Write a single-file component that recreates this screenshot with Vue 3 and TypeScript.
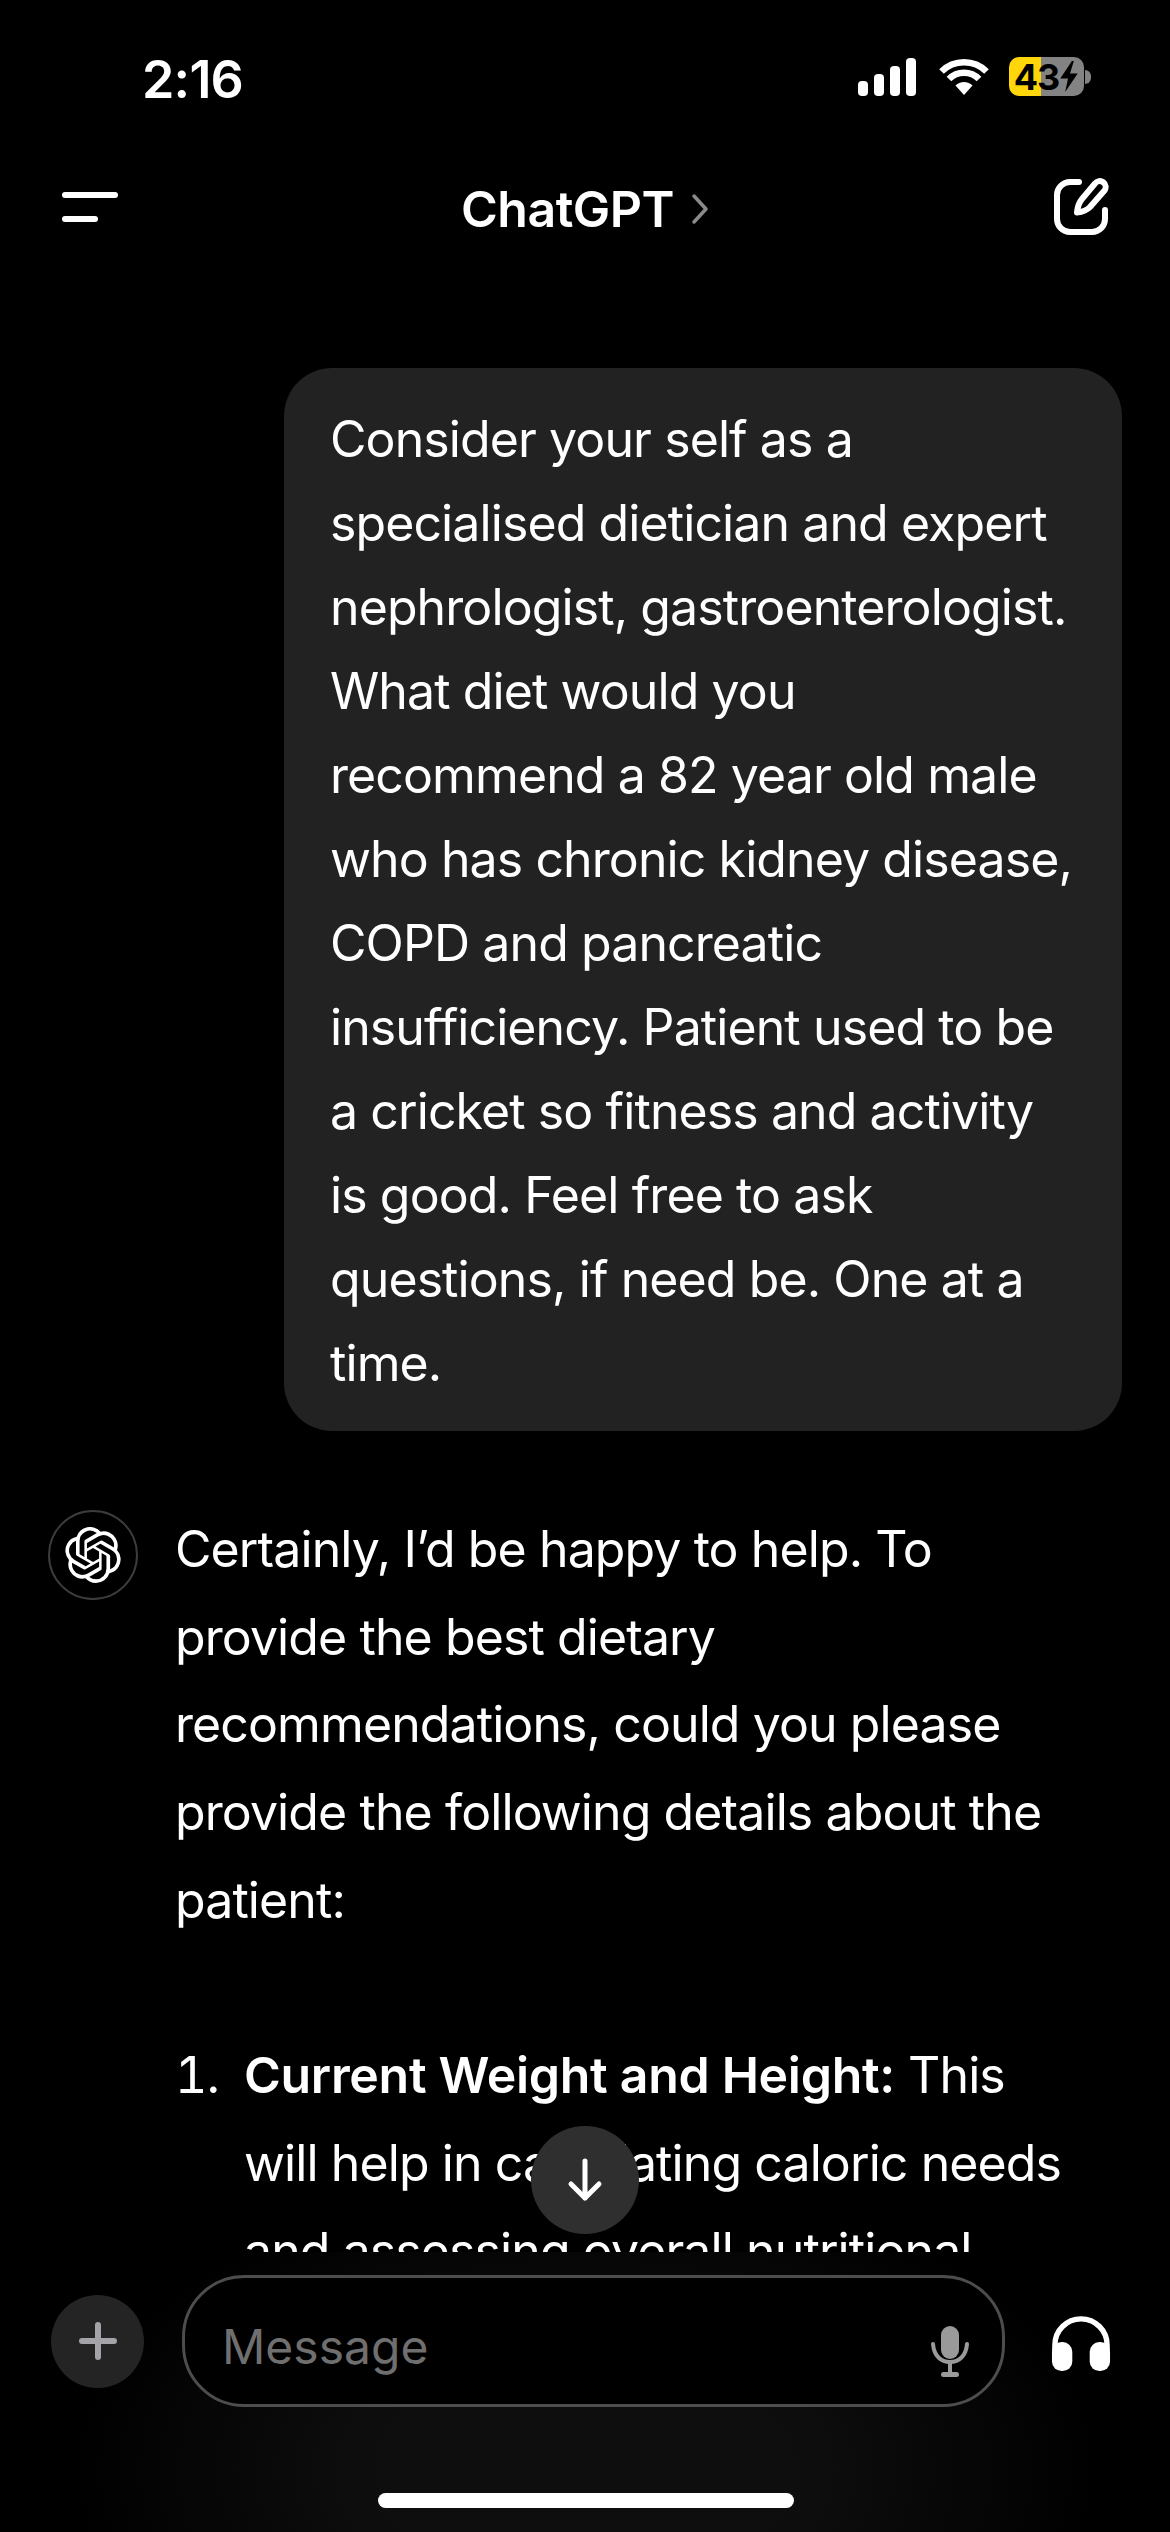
<script setup lang="ts">
const promptText =
  'Consider your self as a specialised dietician and expert nephrologist, gastroenterologist. What diet would you recommend a 82 year old male who has chronic kidney disease, COPD and pancreatic insufficiency. Patient used to be a cricket so fitness and activity is good. Feel free to ask questions, if need be. One at a time.'

const introText =
  'Certainly, I’d be happy to help. To provide the best dietary recommendations, could you please provide the following details about the patient:'

const signalBars = [20, 30, 40, 52]
</script>

<template>
  <div class="phone">
    <header class="status-bar">
      <span class="time">2:16</span>
      <div class="status-icons">
        <div class="signal">
          <span v-for="h in signalBars" :key="h" class="bar" :style="{ height: h / 1.37 + 'px' }"></span>
        </div>
        <svg class="wifi" viewBox="0 0 50 36" width="50" height="36">
          <path d="M25 36 16.5 26.5a12 12 0 0 1 17 0Z" fill="#fff" />
          <path d="M10 20a21 21 0 0 1 30 0" fill="none" stroke="#fff" stroke-width="6.5" />
          <path d="M2.5 12.500a32 32 0 0 1 45 0" fill="none" stroke="#fff" stroke-width="6.5" />
        </svg>
        <div class="battery">
          <div class="battery-body">
            <span>43</span>
            <svg viewBox="0 0 20 32" width="20" height="31">
              <path d="M13 0 1 18h8l-3 14 13-19h-8l4-13Z" fill="#000" />
            </svg>
          </div>
          <span class="battery-nub"></span>
        </div>
      </div>
    </header>

    <nav class="nav-bar">
      <div class="menu-icon">
        <span class="line-long"></span>
        <span class="line-short"></span>
      </div>
      <div class="nav-title">
        <span>ChatGPT</span>
        <svg viewBox="0 0 20 32" width="20" height="32">
          <path d="M4 3 16 16 4 29" fill="none" stroke="#8a8a8e" stroke-width="3.500" stroke-linecap="round" stroke-linejoin="round" />
        </svg>
      </div>
      <svg class="compose-icon" viewBox="0 0 56 58" width="56" height="58">
        <path d="M26 4H17A13 13 0 0 0 4 17V41A13 13 0 0 0 17 54H39A13 13 0 0 0 52 41V32" fill="none" stroke="#fff" stroke-width="6" stroke-linecap="round" />
        <path d="M42 5.500a5.500 5.500 0 0 1 9.500 7L37 29c-3 3.200-8 5-13 5.500 .5-5 2-10 5-13.500Z" fill="none" stroke="#fff" stroke-width="6" stroke-linejoin="round" />
      </svg>
    </nav>

    <main class="chat">
      <div class="user-bubble">{{ promptText }}</div>

      <section class="assistant">
        <div class="avatar">
          <svg viewBox="0 0 24 24" width="56" height="56">
            <path fill="#fff" d="M22.2819 9.8211a5.9847 5.9847 0 0 0-.5157-4.9108 6.0462 6.0462 0 0 0-6.5098-2.9A6.0651 6.0651 0 0 0 4.9807 4.1818a5.9847 5.9847 0 0 0-3.9977 2.9 6.0462 6.0462 0 0 0 .7427 7.0966 5.98 5.98 0 0 0 .511 4.9107 6.051 6.051 0 0 0 6.5146 2.9001A5.9847 5.9847 0 0 0 13.2599 24a6.0557 6.0557 0 0 0 5.7718-4.2058 5.9894 5.9894 0 0 0 3.9977-2.9001 6.0557 6.0557 0 0 0-.7475-7.0729zm-9.022 12.6081a4.4755 4.4755 0 0 1-2.8764-1.0408l.1419-.0804 4.7783-2.7582a.7948.7948 0 0 0 .3927-.6813v-6.7369l2.02 1.1686a.071.071 0 0 1 .038.052v5.5826a4.504 4.504 0 0 1-4.4945 4.4944zm-9.6607-4.1254a4.4708 4.4708 0 0 1-.5346-3.0137l.142.0852 4.783 2.7582a.7712.7712 0 0 0 .7806 0l5.8428-3.3685v2.3324a.0804.0804 0 0 1-.0332.0615L9.74 19.9502a4.4992 4.4992 0 0 1-6.1408-1.6464zM2.3408 7.8956a4.485 4.485 0 0 1 2.3655-1.9728V11.6a.7664.7664 0 0 0 .3879.6765l5.8144 3.3543-2.0201 1.1685a.0757.0757 0 0 1-.071 0l-4.8303-2.7865A4.504 4.504 0 0 1 2.3408 7.872zm16.5963 3.8558L13.1038 8.364 15.1192 7.2a.0757.0757 0 0 1 .071 0l4.8303 2.7913a4.4944 4.4944 0 0 1-.6765 8.1042v-5.6772a.79.79 0 0 0-.407-.667zm2.0107-3.0231l-.142-.0852-4.7735-2.7818a.7759.7759 0 0 0-.7854 0L9.409 9.2297V6.8974a.0662.0662 0 0 1 .0284-.0615l4.8303-2.7866a4.4992 4.4992 0 0 1 6.6802 4.66zM8.3065 12.863l-2.02-1.1638a.0804.0804 0 0 1-.038-.0567V6.0742a4.4992 4.4992 0 0 1 7.3757-3.4537l-.142.0805L8.704 5.459a.7948.7948 0 0 0-.3927.6813zm1.0976-2.3654l2.602-1.4998 2.6069 1.4998v2.9994l-2.5974 1.4997-2.6067-1.4997Z" />
          </svg>
        </div>
        <div class="answer">
          <p>{{ introText }}</p>
          <ol>
            <li>
              <span class="num">1.</span>
              <span><strong>Current Weight and Height:</strong> This will help in calculating caloric needs and assessing overall nutritional status.</span>
            </li>
          </ol>
        </div>
      </section>

      <button class="scroll-down" type="button">
        <svg viewBox="0 0 36 44" width="36" height="44">
          <path d="M18 3V40M4 26 18 40 32 26" fill="none" stroke="#fff" stroke-width="5" stroke-linecap="round" stroke-linejoin="round" />
        </svg>
      </button>
    </main>

    <footer class="composer">
      <div class="composer-row">
        <div class="plus-btn">
          <svg viewBox="0 0 40 40" width="40" height="40">
            <path d="M20 4V36M4 20H36" fill="none" stroke="#a3a3a8" stroke-width="6" stroke-linecap="round" />
          </svg>
        </div>
        <div class="input">
          <span class="placeholder">Message</span>
          <svg class="mic" viewBox="0 0 38 52" width="38" height="52">
            <rect x="10" y="0" width="18" height="33" rx="9" fill="#9a9a9a" />
            <path d="M2 18C3 30 10 36 19 36S35 30 36 18" fill="none" stroke="#9a9a9a" stroke-width="4" stroke-linecap="round" />
            <path d="M19 36V48" stroke="#9a9a9a" stroke-width="4" />
            <rect x="10" y="46" width="18" height="5" rx="2.500" fill="#9a9a9a" />
          </svg>
        </div>
        <svg class="headphones" viewBox="0 0 62 58" width="62" height="58">
          <path d="M4 36V30a27 27 0 0 1 54 0V36" fill="none" stroke="#fff" stroke-width="5.500" />
          <rect x="1" y="27" width="21" height="30" rx="10" fill="#fff" />
          <rect x="40" y="27" width="21" height="30" rx="10" fill="#fff" />
        </svg>
      </div>
      <div class="home-bar"></div>
    </footer>
  </div>
</template>

<style scoped>
.phone {
  width: 1170px;
  height: 2532px;
  background: #000;
  color: #fff;
  font-family: Inter, "Noto Sans", sans-serif;
  display: flex;
  flex-direction: column;
  overflow: hidden;
}

.status-bar {
  height: 154px;
  flex: none;
  display: flex;
  align-items: flex-start;
  justify-content: space-between;
  padding: 48px 79px 0 142px;
  box-sizing: border-box;
}

.time {
  font-size: 52px;
  line-height: 60px;
  font-weight: 600;
  letter-spacing: -0.8px;
  margin-top: 2px;
}

.status-icons {
  display: flex;
  align-items: center;
  margin-top: 9px;
}

.signal {
  display: flex;
  align-items: flex-end;
  gap: 6px;
  height: 38px;
  margin-right: 23px;
}

.bar {
  width: 10px;
  background: #fff;
  border-radius: 4px;
}

.wifi {
  margin-right: 20px;
}

.battery {
  display: flex;
  align-items: center;
}

.battery-body {
  width: 75px;
  height: 39px;
  border-radius: 10px;
  background: linear-gradient(90deg, #ffd60a 0 32px, #838383 32px);
  color: #000;
  display: flex;
  align-items: center;
  justify-content: center;
  font-size: 36px;
  font-weight: 700;
  letter-spacing: -1px;
}

.battery-nub {
  width: 6px;
  height: 14px;
  margin-left: 1px;
  background: #838383;
  border-radius: 0 6px 6px 0;
}

.nav-bar {
  height: 106px;
  flex: none;
  display: flex;
  align-items: center;
  justify-content: space-between;
  padding: 0 62px;
  box-sizing: border-box;
}

.menu-icon {
  width: 56px;
  display: flex;
  flex-direction: column;
  gap: 18px;
}

.line-long,
.line-short {
  display: block;
  height: 6px;
  background: #fff;
  border-radius: 3px;
}

.line-short {
  width: 36px;
}

.nav-title {
  display: flex;
  align-items: center;
  gap: 16px;
  font-size: 50px;
  font-weight: 600;
  letter-spacing: -0.5px;
  margin-top: 3px;
}

.compose-icon {
  margin-right: -1px;
}

.chat {
  flex: 1;
  min-height: 0;
  position: relative;
  overflow: hidden;
  padding: 108px 48px 0 48px;
}

.user-bubble {
  width: 838px;
  margin-left: 236px;
  box-sizing: border-box;
  padding: 29px 44px 26px 46px;
  background: #222;
  border-radius: 48px;
  font-size: 50px;
  line-height: 84px;
  letter-spacing: -0.9px;
}

.assistant {
  display: flex;
  margin-top: 75px;
  gap: 37px;
}

.avatar {
  width: 90px;
  height: 90px;
  flex: none;
  margin-top: 4px;
  box-sizing: border-box;
  border: 2px solid #3c3c3c;
  border-radius: 50%;
  display: flex;
  align-items: center;
  justify-content: center;
}

.answer {
  width: 900px;
  font-size: 50px;
  line-height: 87.700px;
  letter-spacing: -0.9px;
}

.answer p {
  margin: 0 0 87.700px;
}

.answer ol {
  list-style: none;
  margin: 0;
  padding: 0;
}

.answer li {
  display: flex;
}

.num {
  width: 69px;
  flex: none;
  box-sizing: border-box;
  font-variant-numeric: tabular-nums;
}

.answer strong {
  font-weight: 600;
  letter-spacing: -0.3px;
}

.scroll-down {
  position: absolute;
  left: 531px;
  bottom: 18px;
  width: 108px;
  height: 108px;
  padding: 0;
  border: none;
  border-radius: 50%;
  background: #2f2f2f;
  display: flex;
  align-items: center;
  justify-content: center;
}

.composer {
  height: 280px;
  flex: none;
  background: radial-gradient(ellipse 520px 300px at 50% 78%, #0e0e0e 40%, #000 100%);
  display: flex;
  flex-direction: column;
  align-items: center;
  position: relative;
}

.composer-row {
  width: 100%;
  box-sizing: border-box;
  padding: 23px 59px 0 51px;
  display: flex;
  align-items: center;
}

.plus-btn {
  width: 93px;
  height: 93px;
  flex: none;
  border-radius: 50%;
  background: #242424;
  display: flex;
  align-items: center;
  justify-content: center;
}

.input {
  width: 823px;
  height: 132px;
  margin-left: 38px;
  flex: none;
  box-sizing: border-box;
  border: 3px solid #4d4d4d;
  border-radius: 62px;
  background: #000;
  display: flex;
  align-items: center;
  justify-content: space-between;
  padding: 0 33px 0 37px;
}

.placeholder {
  font-size: 48px;
  color: #6f6f6f;
  margin-top: 10px;
}

.mic {
  margin-top: 22px;
}

.headphones {
  margin-left: 46px;
  margin-top: 5px;
}

.home-bar {
  position: absolute;
  left: 378px;
  bottom: 24px;
  width: 416px;
  height: 15px;
  border-radius: 8px;
  background: #fff;
}
</style>
